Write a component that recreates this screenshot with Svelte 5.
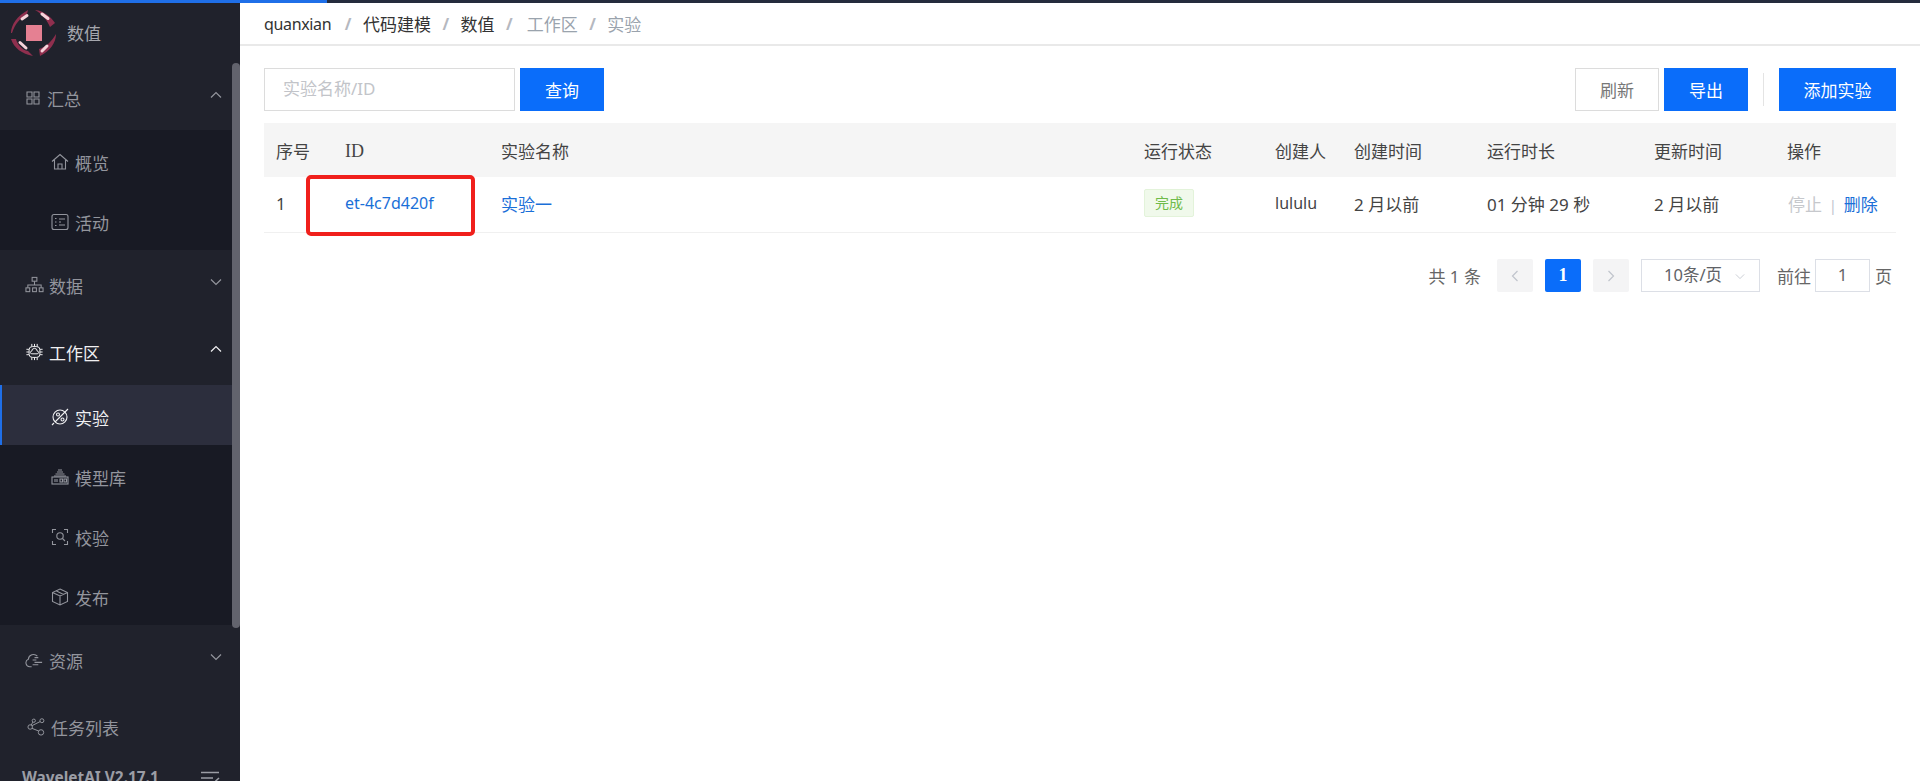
<script>
  const columns = [
    { label: '序号', w: 69 }, { label: 'ID', w: 156 }, { label: '实验名称', w: 643 }, { label: '运行状态', w: 131 },
    { label: '创建人', w: 79 }, { label: '创建时间', w: 133 }, { label: '运行时长', w: 167 }, { label: '更新时间', w: 133 }, { label: '操作', w: 121 }
  ];
  const gridTemplate = columns.map((c) => c.w + 'px').join(' ');
</script>

<div class="page">
  <div class="topbar"><div class="progress"></div></div>
  <div class="shell">
    <aside class="sidebar">
      <div class="brand">
        <svg class="logo" viewBox="0 0 48 48" width="48" height="48">
          <g fill="#8f2f4e">
            <path d="M2 24 C2 16 8 7 19 1 L18 5 C11 9 6 15 3 24z"/>
            <path d="M26 1 C35 2 42 8 46 14 L41 18 C38 11 33 5 26 1z"/>
            <path d="M47 25 C47 34 41 42 31 47 L30 40 C37 38 43 32 47 25z"/>
            <path d="M2 30 C5 39 13 45 24 47 L19 42 C13 41 8 35 7 30z"/>
          </g>
          <g fill="none" stroke="#f6d3da" stroke-width="3" stroke-linecap="round">
            <path d="M13 10 L18 6.500"/><path d="M33 5 L39 9.500"/><path d="M38 37 L33 42"/><path d="M11 33.500 L17 39"/>
          </g>
          <rect x="17" y="16" width="16" height="16" fill="#e58092"/>
        </svg>
        <span>数值</span>
      </div>
      <div class="scrollbar"></div>

      <div class="menu-head h-first">
        <svg class="ico" viewBox="0 0 16 16"><path d="M2 2h5v5H2zM9 2h5v5H9zM2 9h5v5H2zM9 9h5v5H9z"/></svg>
        <span>汇总</span>
        <svg class="chev" viewBox="0 0 12 8"><path d="M1 6.500l5-5 5 5"/></svg>
      </div>
      <div class="sub sub-a">
        <div class="sub-item"><svg class="ico si" viewBox="0 0 18 18"><path d="M1 8.500L9 1.500l8 7M3.500 7v9h11V7M7 16v-5h4v5"/></svg><span>概览</span></div>
        <div class="sub-item"><svg class="ico si" viewBox="0 0 18 18"><rect x="1" y="1.500" width="16" height="15" rx="2"/><path d="M8 6h6M8 12h6M4 5.500h1.500M4 9h1.500M4 12.500h1.500M8 9h2"/></svg><span>活动</span></div>
      </div>

      <div class="menu-head h-data">
        <svg class="ico wide" viewBox="0 0 20 18"><rect x="7.500" y="1" width="5" height="4"/><path d="M10 5v4M3 12V9h14v3"/><rect x="1" y="12" width="4" height="4"/><rect x="8" y="12" width="4" height="4"/><rect x="15" y="12" width="4" height="4"/></svg>
        <span>数据</span>
        <svg class="chev" viewBox="0 0 12 8"><path d="M1 1.500l5 5 5-5"/></svg>
      </div>
      <div class="menu-head active-head h-work">
        <svg class="ico wide" viewBox="0 0 20 20"><rect x="4" y="4" width="12" height="12" rx="3.500"/><path d="M7 1v3M10 1v3M13 1v3M7 16v3M10 16v3M13 16v3M1 7h3M1 10h3M1 13h3M16 7h3M16 10h3M16 13h3"/><path d="M7 12h6a1.500 1.500 0 0 0 0-3 3 3 0 0 0-6 0 1.500 1.500 0 0 0 0 3z"/></svg>
        <span>工作区</span>
        <svg class="chev" viewBox="0 0 12 8"><path d="M1 6.500l5-5 5 5"/></svg>
      </div>
      <div class="sub sub-b">
        <div class="sub-item current"><svg class="ico si" viewBox="0 0 18 18"><circle cx="9" cy="9" r="7"/><path d="M4 14L15 3M1 17l2-2M15 3l2-2"/><circle cx="7" cy="6.500" r="1.500"/><circle cx="11.500" cy="11.500" r="1.500"/></svg><span>实验</span></div>
        <div class="sub-item"><svg class="ico si" viewBox="0 0 18 18"><rect x="1" y="9" width="16" height="7"/><path d="M3 8h12M4.500 6h9M6 4h6M7 2h4M4 11v3M6 11v3"/><rect x="9" y="11" width="2.500" height="3"/><rect x="13" y="11" width="2.500" height="3"/></svg><span>模型库</span></div>
        <div class="sub-item"><svg class="ico si" viewBox="0 0 18 18"><path d="M5 1.500H1.500V5M13 1.500h3.500V5M1.500 13v3.500H5M16.500 13v3.500H13"/><circle cx="9" cy="8" r="3.200"/><path d="M11.500 10.500L14 13"/></svg><span>校验</span></div>
        <div class="sub-item"><svg class="ico si" viewBox="0 0 18 18"><path d="M9 1l7.500 3.500v9L9 17l-7.500-3.500v-9zM1.500 4.500L9 8l7.500-3.500M9 8v9M5 2.800l7.500 3.600"/></svg><span>发布</span></div>
      </div>
      <div class="menu-head h-res">
        <svg class="ico wide" viewBox="0 0 20 18"><path d="M7 16H5a4 4 0 0 1-1.500-7.700A5.500 5.500 0 0 1 13 5M8 9h4M10 6.500h4M10 11.500h8M8 14h6"/></svg>
        <span>资源</span>
        <svg class="chev" viewBox="0 0 12 8"><path d="M1 1.500l5 5 5-5"/></svg>
      </div>
      <div class="menu-head h-task">
        <svg class="ico wide" viewBox="0 0 20 20"><circle cx="3" cy="10" r="2.500"/><circle cx="7" cy="3" r="1.800"/><circle cx="16" cy="3" r="2.200"/><circle cx="15" cy="16" r="3"/><path d="M5 8.500L14 4M5 11.500L12.500 14.500M4 8l2-3.500"/></svg>
        <span>任务列表</span>
      </div>
      <div class="version">
        <span>WaveletAI V2.17.1</span>
        <svg class="fold" viewBox="0 0 20 14"><path d="M1 1.500h18M1 7h12M1 12.500h12M19 7l-3 2.800 3 2.800"/></svg>
      </div>
    </aside>

    <main class="main">
      <nav class="crumbs">
        <span class="dark quan">quanxian</span><i>/</i>
        <span class="dark">代码建模</span><i>/</i>
        <span class="dark">数值</span><i class="wider">/</i>
        <span class="light">工作区</span><i>/</i>
        <span class="light">实验</span>
      </nav>

      <section class="content">
        <div class="toolbar">
          <div class="search-box">实验名称/ID</div>
          <button class="btn primary query">查询</button>
          <div class="spacer"></div>
          <button class="btn plain refresh">刷新</button>
          <button class="btn primary export">导出</button>
          <div class="divider"></div>
          <button class="btn primary add">添加实验</button>
        </div>

        <div class="tbl-wrap">
          <div class="row head" style="grid-template-columns: {gridTemplate}">
            {#each columns as c}
              <div class="cell" class:serif={c.label === 'ID'}>{c.label}</div>
            {/each}
          </div>
          <div class="row body" style="grid-template-columns: {gridTemplate}">
            <div class="cell">1</div>
            <div class="cell link latin">et-4c7d420f</div>
            <div class="cell link">实验一</div>
            <div class="cell"><span class="tag">完成</span></div>
            <div class="cell latin">lululu</div>
            <div class="cell">2 月以前</div>
            <div class="cell">01 分钟 29 秒</div>
            <div class="cell">2 月以前</div>
            <div class="cell ops"><span class="muted">停止</span><span class="bar">|</span><span class="link">删除</span></div>
          </div>
          <div class="annotation"></div>
        </div>

        <div class="pager">
          <span class="total">共 1 条</span>
          <span class="pg-btn"><svg viewBox="0 0 8 12"><path d="M6.500 1L1.500 6l5 5"/></svg></span>
          <span class="pg-num">1</span>
          <span class="pg-btn"><svg viewBox="0 0 8 12"><path d="M1.500 1l5 5-5 5"/></svg></span>
          <span class="size">10条/页<svg viewBox="0 0 12 8"><path d="M1 1.500l5 5 5-5"/></svg></span>
          <span class="goto">前往</span>
          <span class="pg-input">1</span>
          <span class="goto page-word">页</span>
        </div>
      </section>
    </main>
  </div>
</div>

<style>
  :global(body) { margin: 0; background: #fff; }
  .page { width: 1920px; height: 781px; overflow: hidden; font-family: "Noto Sans", "Noto Sans CJK SC", sans-serif; font-size: 17px; color: #333; }
  .topbar { height: 3px; background: #252c3d; }
  .progress { width: 327px; height: 3px; background: #1f6fe8; }
  .shell { display: flex; height: 778px; }

  .sidebar { position: relative; width: 240px; flex: none; background: #20222c; color: #93959d; overflow: hidden; font-size: 17px; }
  .brand { display: flex; align-items: center; height: 45px; padding: 7px 0 0 9px; gap: 10px; color: #a5a7ae; }
  .scrollbar { position: absolute; right: 0; top: 60px; width: 8px; height: 565px; background: #62636d; border-radius: 4px; }
  .menu-head { display: flex; align-items: center; height: 40px; padding-left: 25px; gap: 6px; }
  .h-first { height: 44px; margin-top: 21px; margin-bottom: 10px; }
  .h-data { margin-top: 15px; }
  .h-work { margin-top: 27px; margin-bottom: 13px; }
  .h-res { margin-top: 15px; }
  .h-task { margin-top: 27px; padding-left: 27px; }
  .active-head { color: #f0f0f2; }
  .ico { width: 16px; height: 16px; flex: none; fill: none; stroke: currentColor; stroke-width: 1.100; }
  .ico.wide { width: 19px; height: 18px; margin-right: -1px; }
  .si { width: 18px; height: 18px; }
  .chev { width: 12px; height: 8px; position: absolute; left: 210px; margin-top: -7px; fill: none; stroke: currentColor; stroke-width: 1.200; }
  .sub { background: #181a24; margin-right: 8px; }
  .sub-a { height: 120px; }
  .sub-b { height: 240px; }
  .sub-item { display: flex; align-items: center; height: 60px; padding: 4px 0 0 51px; gap: 6px; box-sizing: border-box; }
  .current { background: #2c2e3d; color: #f0f0f2; border-left: 2px solid #1f6fe8; padding-left: 49px; }
  .version { position: absolute; left: 22px; right: 20px; top: 764px; display: flex; justify-content: space-between; align-items: flex-start; font-size: 15.400px; font-weight: 700; color: #9b9da5; }
  .fold { width: 20px; height: 14px; fill: none; stroke: currentColor; stroke-width: 1.500; margin-top: 4px; }

  .main { flex: 1; min-width: 0; }
  .crumbs { display: flex; align-items: center; height: 41px; padding-left: 24px; border-bottom: 2px solid #e9e9e9; }
  .crumbs i { font-style: normal; color: #b5b8bf; margin: 0 11.500px; font-weight: 700; font-size: 16px; }
  .crumbs i.wider { margin-right: 14px; }
  .crumbs .dark { color: #333; }
  .crumbs .quan { font-size: 16px; letter-spacing: -0.350px; margin-right: 2px; }
  .crumbs .light { color: #9aa3ad; }
  .content { padding: 22px 24px 0; }
  .toolbar { display: flex; align-items: stretch; height: 43px; }
  .search-box { width: 251px; box-sizing: border-box; border: 1px solid #dcdcdc; padding-left: 18px; line-height: 39px; color: #c2c4c9; }
  .btn { border: none; padding: 0; font: inherit; background: #0a6dfa; color: #fff; height: 43px; }
  .query { width: 84px; margin-left: 5px; }
  .spacer { flex: 1; }
  .plain { background: #fff; border: 1px solid #dcdcdc; color: #777; box-sizing: border-box; width: 84px; }
  .export { width: 84px; margin-left: 5px; }
  .divider { width: 1px; height: 33px; background: #e4e4e4; margin: 5px 15px 0 15px; }
  .add { width: 117px; }

  .tbl-wrap { position: relative; margin-top: 12px; }
  .row { display: grid; align-items: center; }
  .head { height: 54px; background: #f5f5f5; color: #444; }
  .body { height: 55px; border-bottom: 1px solid #f0f0f0; color: #444; box-sizing: content-box; }
  .body .cell { padding-bottom: 3px; }
  .cell { padding-left: 12px; white-space: nowrap; }
  .latin { font-size: 16px; }
  .serif { font-family: "Liberation Serif", serif; font-size: 18px; padding-top: 3px; }
  .link { color: #1a6fd8; }
  .tag { display: inline-block; width: 50px; height: 28px; line-height: 26px; box-sizing: border-box; text-align: center; font-size: 14px; color: #6fbb4a; background: #f0f9eb; border: 1px solid #e3f3da; border-radius: 2px; }
  .ops { padding-left: 2px; margin-left: 11px; }
  .muted { color: #c6c8cc; }
  .bar { color: #bcc3cc; margin: 0 7px; font-size: 14px; }
  .annotation { position: absolute; left: 42px; top: 52px; width: 169px; height: 61px; box-sizing: border-box; border: 4.500px solid #f0201c; border-radius: 5px; }

  .pager { display: flex; align-items: center; justify-content: flex-end; margin-top: 26px; height: 33px; color: #666; }
  .total { margin-right: 16px; }
  .pg-btn, .pg-num { width: 36px; height: 33px; display: flex; align-items: center; justify-content: center; background: #f4f4f5; border-radius: 2px; }
  .pg-btn svg { width: 8px; height: 12px; fill: none; stroke: #c0c4cc; stroke-width: 1.200; }
  .pg-num { background: #0a6dfa; color: #fff; font-family: "Liberation Serif", serif; font-weight: 700; font-size: 18px; margin: 0 12px; }
  .size { position: relative; width: 119px; height: 33px; box-sizing: border-box; border: 1px solid #dcdfe6; margin-left: 12px; padding-left: 22px; line-height: 29px; color: #606266; font-size: 16.500px; }
  .size svg { position: absolute; right: 14px; top: 13px; width: 10px; height: 7px; fill: none; stroke: #c0c4cc; stroke-width: 1; }
  .goto { margin-left: 17px; }
  .page-word { margin-left: 5px; margin-right: 4px; }
  .pg-input { width: 55px; height: 33px; box-sizing: border-box; border: 1px solid #dcdfe6; margin-left: 4px; text-align: center; line-height: 29px; }
</style>
